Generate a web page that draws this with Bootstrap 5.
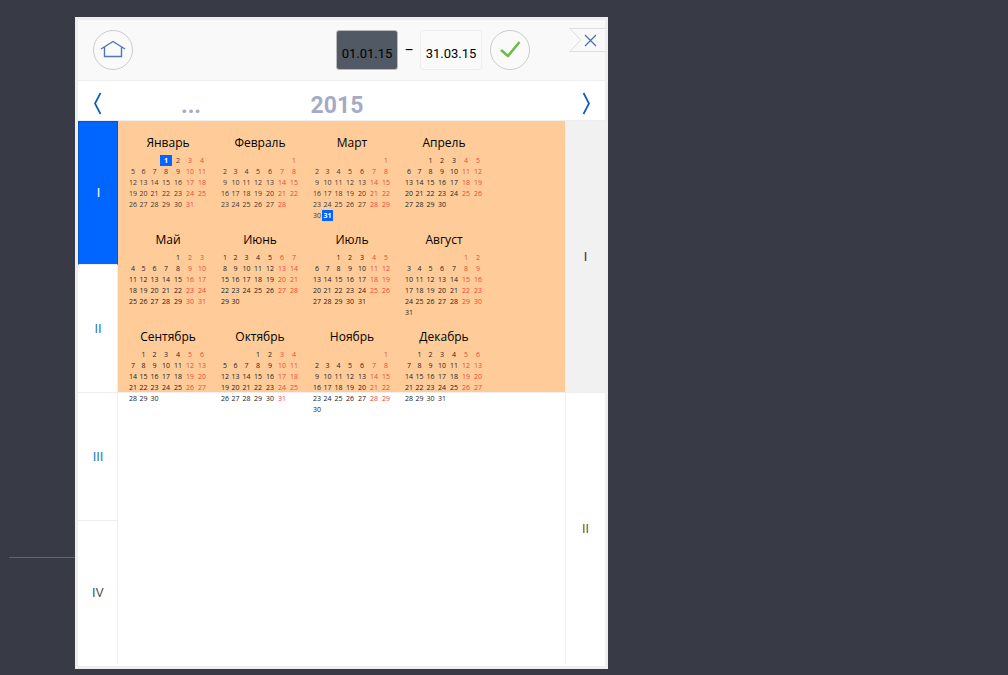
<!DOCTYPE html>
<html lang="ru">
<head>
<meta charset="utf-8">
<meta name="viewport" content="width=device-width, initial-scale=1">
<title>Выбор периода</title>
<link href="https://cdn.jsdelivr.net/npm/bootstrap@5.3.0/dist/css/bootstrap.min.css" rel="stylesheet">
<style>
  body { background: #383a45; color: #000; font-family: Roboto, "Noto Sans", sans-serif; font-size: 14px; line-height: 20px; }
  .page-row { padding-top: 17px; }
  .side-rule { width: 75px; padding: 540px 0 0 9px; }
  .side-rule hr { margin: 0; border-color: #646566; opacity: 1; }
  .period-panel { max-width: 533px; border: 3px solid #eee; background: #fff; padding-bottom: 2px; }
  .panel-top { height: 61px; background: #f9f9f9; border-bottom: 1px solid #eee; padding: 10px 0 0 15px; }
  .round-btn { width: 40px; height: 40px; border: 1px solid #ccc; border-radius: 50%; background: #fafafa; padding: 0; line-height: 0; }
  .date-box { width: 62px; height: 40px; border: 1px solid #eee; border-radius: 3px; background: #fafafa; padding: 6px 0 0; text-align: center; font-size: 13px; color: #000; }
  .date-box.picked { background: #505964; border-color: #bbb; }
  .dash { width: 22px; text-align: center; }
  .dates { margin-right: 39px; }
  .close-tab { width: 36px; height: 26px; padding: 0; border: 0; background: none; line-height: 0; margin-top: -3px; }
  .year-bar { height: 40px; border-bottom: 1px solid #eee; }
  .year-bar button { width: 40px; padding: 4px 0 0; border: 0; background: none; line-height: 0; }
  .year-bar a { width: 146px; text-align: center; color: #a5abc4; font-size: 23px; line-height: 28px; font-weight: 700; text-decoration: none; padding-top: 11px; }
  .period-body { min-height: 543px; }
  .strip { width: 40px; }
  .strip button { border: 0; border-bottom: 1px solid #eee; background: #fff; padding: 1px 0 0; font-size: 13px; flex: 128 0 0; }
  .strip button:last-child { border-bottom: 0; }
  .quarters button { border-right: 1px solid #eee; color: #287fb9; padding-left: 1px; }
  .quarters button:first-child { flex-grow: 143; background: #06f; color: #fff; border: 1px solid #0756b8; border-bottom-color: #eee; }
  .quarters button:last-child { flex-grow: 144; color: #4d5560; }
  .halves button { border-left: 1px solid #eee; flex: 1 0 0; color: #7c5530; }
  .halves button:first-child { background: #f1f1f1; color: #5a2033; }
  .half-zone { height: 50%; background: #fc9; border-bottom: 1px solid #eee; padding: 0 10px; }
  .months { display: grid; grid-template-columns: repeat(4, 80px); column-gap: 12px; grid-auto-rows: 97px; }
  .month-grid { table-layout: fixed; width: 80px; font: 7px/11px "Open Sans", "Noto Sans", sans-serif; color: #222; caption-side: top; }
  .month-grid caption { height: 34px; padding: 12px 0 2px; text-align: center; white-space: nowrap; color: #000; font-size: 12px; line-height: 20px; }
  .month-grid td { height: 11px; padding: 0; text-align: center; white-space: nowrap; }
  .month-grid td.off { color: #e8483c; }
  .month-grid td.edge { background: #06f; color: #fff; font-weight: 700; }
  .month-grid.in-range { color: #443830; }
  .c10 { width: 10px; } .c11 { width: 11px; } .c12 { width: 12px; }
</style>
</head>
<body>
<div class="page-row d-flex">
  <div class="side-rule flex-shrink-0"><hr></div>
  <main class="period-panel flex-grow-1">
    <header class="panel-top d-flex justify-content-between align-items-start">
      <button class="round-btn" aria-label="Домой">
        <svg width="38" height="38" viewBox="0 0 38 38" fill="none" stroke="#5275b7" stroke-width="1.4"><path d="M7 18 19 10.500 31 18M10.500 16V25.500H27.500V16"/></svg>
      </button>
      <div class="d-flex align-items-center dates ms-auto">
        <input class="date-box picked" type="text" value="01.01.15" aria-label="Начало периода">
        <span class="dash">–</span>
        <input class="date-box" type="text" value="31.03.15" aria-label="Конец периода">
        <button class="round-btn ms-2" aria-label="Применить">
          <svg width="38" height="38" viewBox="0 0 38 38" fill="none" stroke="#68bd45" stroke-width="2.600"><path d="m10 19 7 6L28.500 11"/></svg>
        </button>
      </div>
      <button class="close-tab" aria-label="Закрыть">
        <svg width="36" height="26" viewBox="0 0 36 26" fill="none"><path d="M36 1.500H.8L12 13 .8 24.500H36" stroke="#ddd"/><path d="m16 8 11 11M27 8 16 19" stroke="#4b73b4" stroke-width="1.300"/></svg>
      </button>
    </header>
    <nav class="year-bar d-flex align-items-center" aria-label="Год">
      <button aria-label="Назад"><svg width="16" height="24" viewBox="0 0 16 24" fill="none" stroke="#0b5cc0" stroke-width="1.700"><path d="M10.500 2 5 12.500 10.500 23"/></svg></button>
      <a href="#">...</a>
      <a href="#">2015</a>
      <button class="ms-auto" aria-label="Вперёд"><svg width="16" height="24" viewBox="0 0 16 24" fill="none" stroke="#0b5cc0" stroke-width="1.700"><path d="M6.500 2 12 12.500 6.500 23"/></svg></button>
    </nav>
    <div class="period-body d-flex align-items-stretch">
      <div class="strip quarters d-flex flex-column flex-shrink-0">
        <button>I</button><button>II</button><button>III</button><button>IV</button>
      </div>
      <div class="flex-grow-1"><div class="half-zone"><div class="months" id="months"></div></div></div>
      <div class="strip halves d-flex flex-column flex-shrink-0">
        <button>I</button><button>II</button>
      </div>
    </div>
  </main>
</div>
<script src="https://cdn.jsdelivr.net/npm/bootstrap@5.3.0/dist/js/bootstrap.bundle.min.js"></script>
<script>
  const names = ['Январь','Февраль','Март','Апрель','Май','Июнь','Июль','Август','Сентябрь','Октябрь','Ноябрь','Декабрь'];
  const cols = [10, 11, 11, 12, 12, 12, 12].map(w => `<col class="c${w}">`).join('');
  document.getElementById('months').innerHTML = names.map((name, m) => {
    const shift = (new Date(2015, m, 1).getDay() + 6) % 7;
    const count = new Date(2015, m + 1, 0).getDate();
    let rows = '';
    for (let start = 0; start < shift + count; start += 7) {
      rows += '<tr>';
      for (let i = 0; i < 7; i++) {
        const day = start + i - shift + 1;
        const edge = (m === 0 && day === 1) || (m === 2 && day === 31);
        rows += `<td class="${edge ? 'edge' : i > 4 ? 'off' : ''}">${day > 0 && day <= count ? day : ''}</td>`;
      }
      rows += '</tr>';
    }
    return `<div><table class="month-grid${m < 3 ? ' in-range' : ''}"><caption>${name}</caption><colgroup>${cols}</colgroup><tbody>${rows}</tbody></table></div>`;
  }).join('');
</script>
</body>
</html>
